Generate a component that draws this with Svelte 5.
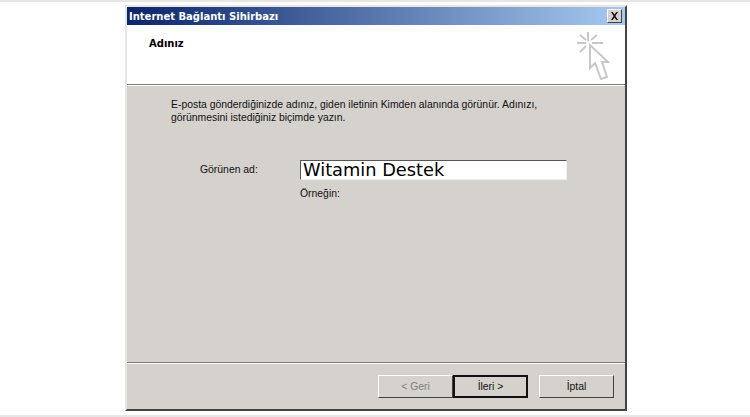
<script>
  const buttons = [
    { label: "< Geri", kind: "disabled" },
    { label: "İleri >", kind: "default" },
    { label: "İptal", kind: "" }
  ];
</script>

<div class="page">
  <div class="window">
    <div class="titlebar">
      <span class="title">Internet Bağlantı Sihirbazı</span>
      <span class="close">
        <svg width="9" height="8" viewBox="0 0 9 8"><path d="M1 0 L2.5 0 L4.5 2.6 L6.5 0 L8 0 L5.3 4 L8 8 L6.5 8 L4.5 5.4 L2.5 8 L1 8 L3.7 4 Z" fill="#000" /></svg>
      </span>
    </div>
    <div class="header">
      <span class="heading">Adınız</span>
      <svg class="cursor" width="33" height="50" viewBox="0 0 33 50" fill="none">
        <g stroke="#c8c8c8" stroke-width="2">
          <path d="M11 0 V9 M0 11 H9 M15 11 H26 M3 3 L9 8 M20 3 L14 8 M3 20 L9 14" />
          <path d="M13 13 V36 L18 31 L24 47 L30 45 L25 30 L31 30 Z" fill="#fff" />
        </g>
      </svg>
    </div>
    <div class="rule"></div>
    <div class="content">
      <p class="intro">E-posta gönderdiğinizde adınız, giden iletinin Kimden alanında görünür. Adınızı,<br />görünmesini istediğiniz biçimde yazın.</p>
      <div class="form">
        <span class="label">Görünen ad:</span>
        <div class="field">
          <div class="input">Witamin Destek</div>
          <span class="example">Örneğin:</span>
        </div>
      </div>
    </div>
    <div class="rule"></div>
    <div class="footer">
      {#each buttons as b}
        <button class={b.kind}>{b.label}</button>
      {/each}
    </div>
  </div>
</div>

<style>
:global(body) {
  margin: 0;
  background: #fff;
}

* {
  box-sizing: border-box;
}

.page {
  width: 750px;
  height: 417px;
  border-top: 2px solid #e6e6e6;
  border-bottom: 2px solid #e6e6e6;
  padding: 3px 0 0 125px;
  font-family: "Liberation Sans", sans-serif;
  font-size: 10.4px;
  color: #111;
}

.window {
  width: 502px;
  height: 406px;
  background: #d5d2cd;
  border: 2px solid;
  border-color: #e8e6e2 #444 #444 #e8e6e2;
  display: flex;
  flex-direction: column;
}

.titlebar {
  height: 18px;
  background: linear-gradient(90deg, #0a246a, #a6caf0);
  display: flex;
  align-items: center;
  justify-content: space-between;
  padding: 0 3px 0 2px;
}

.title {
  font-family: "DejaVu Sans", sans-serif;
  font-weight: bold;
  font-size: 10px;
  color: #fff;
}

.close {
  width: 15px;
  height: 14px;
  background: #d5d2cd;
  border: 1px solid;
  border-color: #fff #404040 #404040 #fff;
  display: flex;
  align-items: center;
  justify-content: center;
}

.header {
  height: 59px;
  background: #fff;
  display: flex;
  justify-content: space-between;
  padding: 12px 15px 0 22px;
}

.heading {
  font-family: "DejaVu Sans", sans-serif;
  font-weight: bold;
  font-size: 10px;
  line-height: 14px;
  color: #000;
}

.cursor {
  margin-top: -5px;
}

.rule {
  height: 2px;
  flex: none;
  border-top: 1px solid #808080;
  border-bottom: 1px solid #fff;
}

.content {
  flex: 1;
  padding: 12px 0 0 44px;
}

.intro {
  margin: 0;
  line-height: 13px;
}

.form {
  display: flex;
  margin-top: 36px;
  padding-left: 29px;
}

.label {
  width: 100px;
  padding-top: 4px;
}

.field {
  display: flex;
  flex-direction: column;
  gap: 8px;
}

.input {
  width: 267px;
  height: 20px;
  background: #fff;
  border: 1px solid;
  border-color: #555 #eee #eee #555;
  font-family: "DejaVu Sans", sans-serif;
  font-size: 17.8px;
  line-height: 18px;
  padding-left: 2px;
  color: #000;
}

.footer {
  height: 45px;
  flex: none;
  display: flex;
  align-items: flex-start;
  padding: 11px 0 0 251px;
}

button {
  width: 75px;
  height: 23px;
  padding: 0;
  background: #d5d2cd;
  border: 1px solid;
  border-color: #fff #404040 #404040 #fff;
  font: inherit;
  color: #111;
}

.disabled {
  color: #808080;
}

.default {
  border: 2px solid #111;
  margin-right: 11px;
}
</style>
